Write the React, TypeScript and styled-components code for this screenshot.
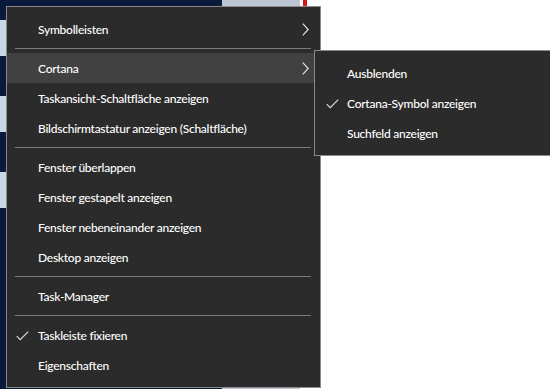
import React from "react";
import styled, { createGlobalStyle } from "styled-components";

// Types
type Entry =
  | { kind: "item"; label: string; checked?: boolean; sub?: boolean; active?: boolean }
  | { kind: "sep" };

// Data
const mainEntries: Entry[] = [
  { kind: "item", label: "Symbolleisten", sub: true },
  { kind: "sep" },
  { kind: "item", label: "Cortana", sub: true, active: true },
  { kind: "item", label: "Taskansicht-Schaltfläche anzeigen" },
  { kind: "item", label: "Bildschirmtastatur anzeigen (Schaltfläche)" },
  { kind: "sep" },
  { kind: "item", label: "Fenster überlappen" },
  { kind: "item", label: "Fenster gestapelt anzeigen" },
  { kind: "item", label: "Fenster nebeneinander anzeigen" },
  { kind: "item", label: "Desktop anzeigen" },
  { kind: "sep" },
  { kind: "item", label: "Task-Manager" },
  { kind: "sep" },
  { kind: "item", label: "Taskleiste fixieren", checked: true },
  { kind: "item", label: "Eigenschaften" },
];

const cortanaEntries: Entry[] = [
  { kind: "item", label: "Ausblenden" },
  { kind: "item", label: "Cortana-Symbol anzeigen", checked: true },
  { kind: "item", label: "Suchfeld anzeigen" },
];

// Styles
const GlobalStyle = createGlobalStyle`
  html, body {
    margin: 0;
    padding: 0;
    background: #ffffff;
    overflow: hidden;
  }
  body {
    font-family: Lato, "Noto Sans", sans-serif;
  }
`;

const Desktop = styled.div`
  position: relative;
  width: 550px;
  height: 389px;
  display: flex;
  overflow: hidden;
`;

const Wallpaper = styled.div`
  width: 222px;
  background: #0b1a3b;
  display: flex;
  flex-direction: column;
  gap: 40px;
  padding-top: 20px;
`;

const DesktopIcon = styled.div`
  width: 7px;
  height: 36px;
  background: #c9d6e4;
`;

const Window = styled.div<{ $tone: string; $width?: number }>`
  width: ${p => (p.$width ? `${p.$width}px` : "auto")};
  flex: ${p => (p.$width ? "none" : "1")};
  background: ${p => p.$tone};
  display: flex;
  align-items: flex-start;
`;

const TitleMark = styled.div`
  width: 4px;
  height: 6px;
  background: #d21a1a;
  margin-left: 3px;
`;

const Menu = styled.div<{ $left: number; $top: number; $width: number }>`
  position: absolute;
  left: ${p => p.$left}px;
  top: ${p => p.$top}px;
  width: ${p => p.$width}px;
  box-sizing: border-box;
  background: #2b2b2b;
  border: 1px solid #8a8a8a;
  padding: 7px 0 7px;
  display: flex;
  flex-direction: column;
`;

const Row = styled.div<{ $active?: boolean; $indent: number }>`
  position: relative;
  height: 30px;
  display: flex;
  align-items: center;
  padding-left: ${p => p.$indent}px;
  background: ${p => (p.$active ? "#414141" : "transparent")};
  color: #ffffff;
  font-size: 12px;
  font-weight: 500;
  letter-spacing: -0.25px;
  white-space: nowrap;
`;

const Separator = styled.div`
  height: 1px;
  background: #7d7d7d;
  margin: 4px 9px 4px 8px;
`;

const Check = styled.svg`
  position: absolute;
  top: 11px;
`;

const Chevron = styled.svg`
  position: absolute;
  right: 11px;
  top: 9px;
`;

const CheckIcon = ({ left }: { left: number }) => (
  <Check style={{ left }} width="13" height="10" viewBox="0 0 13 10">
    <polyline points="0.8,5.2 4.2,8.6 12.2,0.6" fill="none" stroke="#d6dbe2" strokeWidth="1.2" />
  </Check>
);

const ChevronIcon = () => (
  <Chevron width="7" height="13" viewBox="0 0 7 13">
    <polyline points="0.8,0.6 6.2,6.5 0.8,12.4" fill="none" stroke="#dfe3e8" strokeWidth="1.2" />
  </Chevron>
);

const MenuList = ({ entries, indent, checkLeft }: { entries: Entry[]; indent: number; checkLeft: number }) => (
  <>
    {entries.map((e, i) =>
      e.kind === "sep" ? (
        <Separator key={i} />
      ) : (
        <Row key={i} $active={e.active} $indent={indent}>
          {e.checked && <CheckIcon left={checkLeft} />}
          {e.label}
          {e.sub && <ChevronIcon />}
        </Row>
      )
    )}
  </>
);

const App = () => (
  <>
    <GlobalStyle />
    <Desktop>
      <Wallpaper>
        <DesktopIcon />
        <DesktopIcon />
        <DesktopIcon />
      </Wallpaper>
      <Window $tone="#bcc6d3" $width={78} />
      <Window $tone="#ffffff">
        <TitleMark />
      </Window>
      <Menu $left={6} $top={6} $width={315}>
        <MenuList entries={mainEntries} indent={31} checkLeft={9} />
      </Menu>
      <Menu $left={314} $top={50} $width={240}>
        <MenuList entries={cortanaEntries} indent={32} checkLeft={11} />
      </Menu>
    </Desktop>
  </>
);

export default App;
